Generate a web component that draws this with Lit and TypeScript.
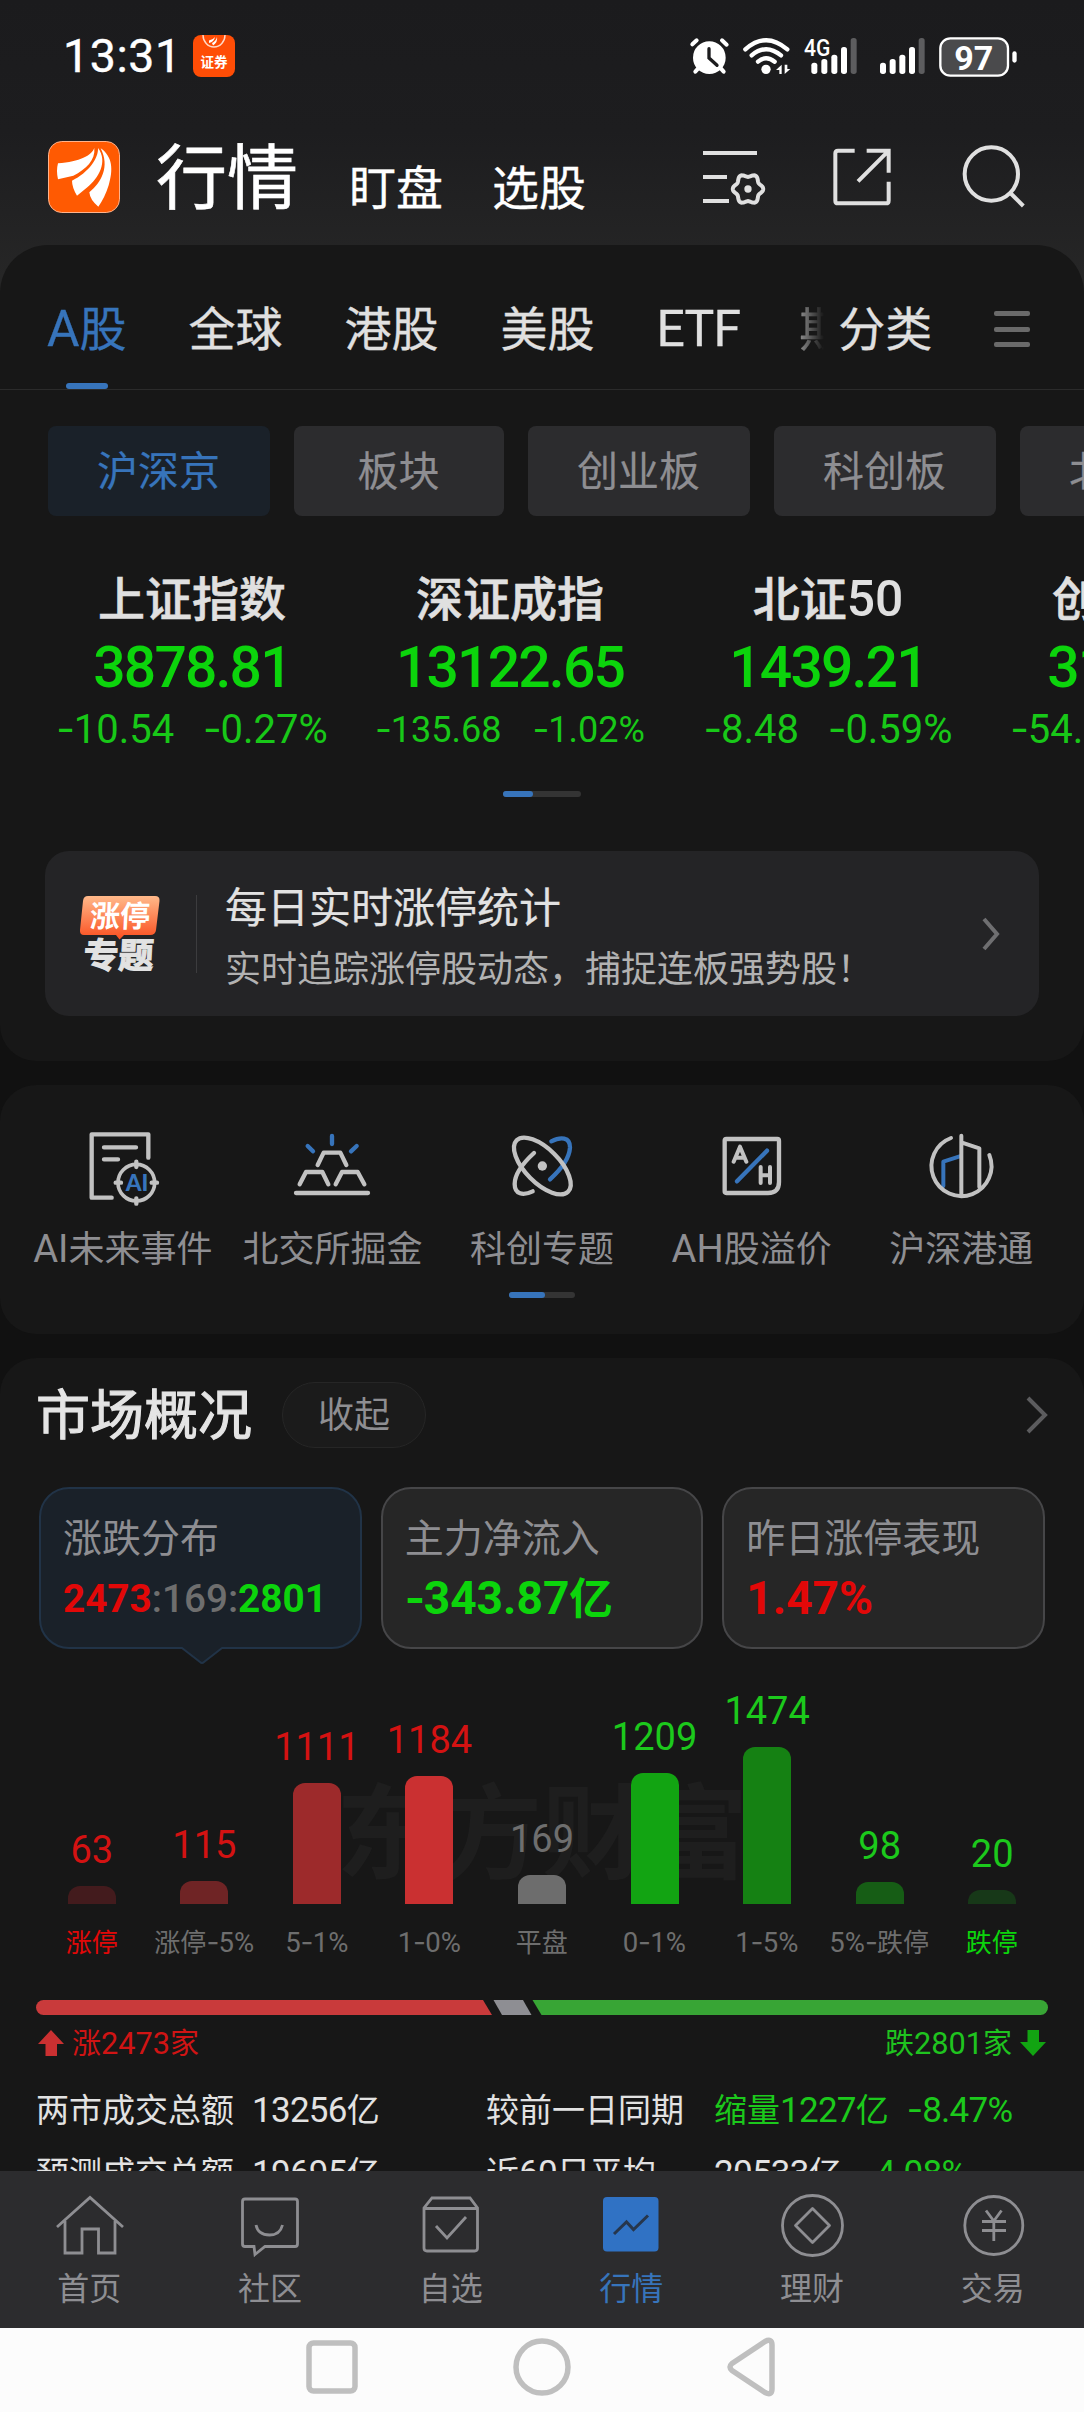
import { LitElement, html, css, svg } from "lit";
import { customElement, property } from "lit/decorators.js";

/** Splits mixed text so Latin runs and dashes can be sized apart from Han characters. */
const mix = (text: string) =>
  (text.match(/-|[\x20-\x2c\x2e-\x7e]+|[^\x20-\x7e]+/g) ?? []).map((run) =>
    run === "-"
      ? html`<span class="dash">-</span>`
      : /^[\x20-\x7e]/.test(run)
        ? html`<span class="lat">${run}</span>`
        : run
  );

const base = css`
  :host, * { box-sizing: border-box; }
  .lat { font-size: 1.06em; line-height: 0; white-space: pre; }
  .dash { font-family: Inter, sans-serif; line-height: 0; font-size: 1.08em; letter-spacing: -0.03em; }
  svg { display: block; flex: none; }
`;

const gearPath = (() => {
  const pts: string[] = [];
  for (let i = 0; i < 120; i++) {
    const a = (i / 120) * Math.PI * 2;
    const r = 41 + 4.6 * Math.cos(6 * a);
    pts.push(`${(234 + r * Math.cos(a)).toFixed(1)} ${(507 + r * Math.sin(a)).toFixed(1)}`);
  }
  return `M${pts.join("L")}Z`;
})();

@customElement("status-bar")
class StatusBar extends LitElement {
  static styles = [base, css`
    :host { display: flex; align-items: center; height: 112px; padding: 0 66px 0 63px; color: #fff; }
    .time { font-size: 46.5px; line-height: 56px; width: 130px; letter-spacing: 0.6px; -webkit-text-stroke: 0.4px; }
    .grow { flex: 1; }
  `];
  render() {
    const sim = (xs: number[]) =>
      xs.map((x, i) => {
        const top = [128, 117, 104, 81, 54][i];
        return svg`<rect x=${x - 9} y=${top} width="18" height=${162 - top} rx="8" fill=${i === 4 ? "#5d5d5f" : "#fff"}></rect>`;
      });
    return html`
      <div class="time">13:31</div>
      <svg width="42" height="42" viewBox="0 0 42 42">
        <rect width="42" height="42" rx="8" fill="#ff4d06"></rect>
        <path d="M10 0A11 12 0 0 0 32 0" fill="none" stroke="#ffd9c8" stroke-width="1.4"></path>
        <path d="M22 2Q20 5 16 5.500V8Q21 7 22 2ZM24 2Q23 6 19 8L20 10.500Q25 7 24 2Z" fill="#fff"></path>
        <text x="21" y="31.500" text-anchor="middle" font-family="Noto Sans CJK SC, sans-serif" font-size="13.500" font-weight="700" fill="#fff">证券</text>
      </svg>
      <div class="grow"></div>
      <svg width="330" height="44" viewBox="54 42 990 132">
        <circle cx="118" cy="113" r="49" fill="#fff"></circle>
        <g stroke="#fff" stroke-width="12" stroke-linecap="round" fill="none">
          <path d="M67 73L80 61M156 61L170 74M84 146L76 155M153 146L161 155"></path>
        </g>
        <path d="M117 86V114L141 136" fill="none" stroke="#1c1c1e" stroke-width="10" stroke-linecap="round"></path>
        <g stroke="#fff" stroke-width="13" fill="none" stroke-linecap="round">
          <path d="M226 88Q288 33 352 88"></path>
          <path d="M245 106Q288 69 333 106"></path>
          <path d="M264 125Q288 105 314 125"></path>
        </g>
        <circle cx="288" cy="148" r="14" fill="#fff"></circle>
        <path d="M318 150L335 134V162H328V150ZM344 134V162L361 147H352V134Z" fill="#fff"></path>
        <text x="402" y="107" font-family="Roboto, sans-serif" font-weight="500" font-size="70" textLength="79" lengthAdjust="spacingAndGlyphs" fill="#fff">4G</text>
        ${sim([433, 463, 493, 522, 551])}
        ${sim([639, 668, 697, 726, 755])}
        <rect x="811" y="55" width="203" height="112" rx="30" fill="#4a4a4c" stroke="#fff" stroke-width="7"></rect>
        <rect x="1027" y="94" width="13" height="34" rx="6.500" fill="#fff"></rect>
        <text x="911" y="149" text-anchor="middle" font-family="Roboto, sans-serif" font-weight="700" font-size="102" fill="#fff">97</text>
      </svg>`;
  }
}

@customElement("app-header")
class AppHeader extends LitElement {
  static styles = [base, css`
    :host { display: flex; height: 133px; padding: 29px 56px 0 48px; color: #fff; white-space: nowrap; }
    .title { font-size: 71px; line-height: 76px; height: 76px; margin-left: 36px; width: 142px; -webkit-text-stroke: 0.6px #fff; }
    .link { font-size: 47px; line-height: 96px; height: 97px; margin-left: 51px; width: 94px; -webkit-text-stroke: 0.3px #fff; }
    .link + .link { margin-left: 49px; }
    .grow { flex: 1; }
    .ico { margin: 1px 0 0 57px; }
    .ico.last { margin-left: 61px; }
    g { fill: none; stroke: #e0e0e0; stroke-width: 12; }
  `];
  render() {
    return html`
      <svg width="72" height="72" viewBox="54 363 216 216">
        <rect x="55.500" y="364.500" width="213" height="213" rx="40" fill="#ff5a02" stroke="#ffb38c" stroke-width="3"></rect>
        <path fill="#fff" d="M193 384C185 406 150 425 84 430Q78 452 84 478L130 467C168 448 197 420 193 384Z"></path>
        <path fill="#fff" d="M204 384C206 415 175 458 126 482Q126 502 141 527L172 502C205 475 235 425 204 384Z"></path>
        <path fill="#fff" d="M212 385C248 410 250 450 236 496Q225 532 205 560Q180 540 178 517C215 487 240 440 212 385Z"></path>
      </svg>
      <div class="title">行情</div>
      <div class="link">盯盘</div>
      <div class="link">选股</div>
      <div class="grow"></div>
      <svg class="ico" width="70" height="70" viewBox="90 366 210 210">
        <g><path d="M99 399H261M99 471H171M99 543H177"></path><path d=${gearPath}></path></g>
        <circle cx="234" cy="507" r="11" fill="#e0e0e0"></circle>
      </svg>
      <svg class="ico" width="70" height="70" viewBox="471 366 210 210">
        <g><path d="M554 392H504Q496 392 496 400V542Q496 550 504 550H648Q656 550 656 542V485M590 392H656V458M564 484L654 394"></path></g>
      </svg>
      <svg class="ico last" width="70" height="70" viewBox="864 366 210 210">
        <g><circle cx="964" cy="462" r="80"></circle><path d="M1018 516L1060 558"></path></g>
      </svg>`;
  }
}

@customElement("market-tabs")
class MarketTabs extends LitElement {
  static styles = [base, css`
    :host { display: block; }
    .tabs { display: flex; height: 145px; border-bottom: 1px solid #2b2b2b; padding: 54px 54px 0 47px; font-size: 47px; line-height: 62px; color: #e0e0e0; white-space: nowrap; -webkit-text-stroke: 0.3px; }
    .tab { margin-right: 62px; height: 90px; display: flex; flex-direction: column; align-items: center; justify-content: space-between; }
    .tab.etf { margin-right: 59px; letter-spacing: -0.8px; }
    .tab.on { color: #3774bb; }
    .mark { width: 42px; height: 6px; border-radius: 3px; background: #3774bb; }
    .cut { width: 25px; height: 63px; overflow: hidden; -webkit-mask-image: linear-gradient(90deg, rgba(0,0,0,.6), transparent); mask-image: linear-gradient(90deg, rgba(0,0,0,.6), transparent); }
    .more { margin-left: 14px; }
    .grow { flex: 1; }
    .menu { display: flex; flex-direction: column; gap: 10.500px; padding-top: 12px; }
    .menu i { width: 36px; height: 5px; border-radius: 2px; background: #6a6a6a; }
    .chips { display: flex; gap: 24px; padding: 36px 0 0 48px; overflow: hidden; }
    .chip { flex: none; width: 222px; height: 90px; border-radius: 8px; background: #2c2c2e; color: #8e8e92; font-size: 41px; line-height: 93px; text-align: center; padding-right: 1px; -webkit-text-stroke: 0.2px; }
    .chip.short { width: 210px; }
    .chip.on { background: #1a2129; color: #3774bb; }
  `];
  render() {
    return html`
      <div class="tabs">
        <div class="tab on"><span>${mix("A股")}</span><i class="mark"></i></div>
        ${["全球", "港股", "美股"].map((t) => html`<div class="tab">${t}</div>`)}
        <div class="tab etf"><span>${mix("ETF")}</span></div>
        <div class="cut">期</div>
        <div class="more">分类</div>
        <div class="grow"></div>
        <div class="menu"><i></i><i></i><i></i></div>
      </div>
      <div class="chips">
        ${["沪深京", "板块", "创业板", "科创板", "北交所"].map(
          (t, i) => html`<div class="chip ${i === 0 ? "on" : ""} ${t.length === 2 ? "short" : ""}">${t}</div>`
        )}
      </div>`;
  }
}

@customElement("pager-bar")
class PagerBar extends LitElement {
  @property({ type: Number }) total = 78;
  @property({ type: Number }) active = 30;
  static styles = css`
    :host { display: flex; justify-content: center; }
    .track { height: 6px; border-radius: 3px; background: #343434; }
    .fill { height: 6px; border-radius: 3px; background: #3774bb; }
  `;
  render() {
    return html`<div class="track" style="width:${this.total}px"><div class="fill" style="width:${this.active}px"></div></div>`;
  }
}

@customElement("index-strip")
class IndexStrip extends LitElement {
  static styles = [base, css`
    :host { display: block; height: 238px; padding-top: 53px; overflow: hidden; }
    .row { display: flex; width: 1272px; margin-left: 33px; }
    .col { width: 318px; text-align: center; white-space: nowrap; }
    .name { font-size: 47px; line-height: 61px; font-weight: 500; color: #e0e0e0; -webkit-text-stroke: 0.6px #e0e0e0; }
    .name .lat { -webkit-text-stroke: 0; }
    .val { font-size: 57px; line-height: 75px; font-weight: 500; color: #0cd40c; letter-spacing: -1.8px; }
    .chg { display: flex; justify-content: center; gap: 29px; font-size: 37.700px; line-height: 50px; color: #18c818; }
    .chg.small { font-size: 34px; gap: 31px; }
  `];
  render() {
    const data = [
      ["上证指数", "3878.81", "-10.54", "-0.27%"],
      ["深证成指", "13122.65", "-135.68", "-1.02%"],
      ["北证50", "1439.21", "-8.48", "-0.59%"],
      ["创业板指", "3117.69", "-54.61", "-1.72%"],
    ];
    return html`<div class="row">
      ${data.map(([n, v, a, b]) => html`<div class="col">
        <div class="name">${mix(n)}</div>
        <div class="val">${v}</div>
        <div class="chg ${a.length > 6 ? "small" : ""}"><span>${mix(a)}</span><span>${mix(b)}</span></div>
      </div>`)}
    </div>`;
  }
}

@customElement("topic-banner")
class TopicBanner extends LitElement {
  static styles = [base, css`
    :host { display: flex; align-items: center; height: 165px; margin: 54px 45px 0; padding: 0 36px 0 33px; border-radius: 24px; background: #242426; }
    .rule { width: 1px; height: 78px; background: #3c3c3e; margin: 0 28px 0 34px; }
    .copy { flex: 1; white-space: nowrap; padding-top: 12px; }
    .t { font-size: 42px; line-height: 60px; color: #e2e2e2; -webkit-text-stroke: 0.2px; }
    .s { font-size: 36px; line-height: 62px; color: #b2b2b2; }
  `];
  render() {
    return html`
      <svg width="84" height="84" viewBox="0 0 84 84">
        <defs><linearGradient id="g" x1="0" y1="0" x2="0" y2="1">
          <stop offset="0" stop-color="#ffb98a"></stop><stop offset="1" stop-color="#fb4f20"></stop>
        </linearGradient></defs>
        <path d="M10 4H77Q82 4 81.500 9L78 38Q77.500 43 72 43H46L41.500 47.500L38 43H6Q1.500 43 2 38L5 9Q5.500 4 10 4Z" fill="url(#g)"></path>
        <g font-family="Noto Sans CJK SC, sans-serif" font-weight="700" text-anchor="middle">
          <text transform="translate(41.500 34.500) skewX(-3)" font-size="30" fill="#fff">涨停</text>
          <text transform="translate(40 76) skewX(-3)" font-size="35" fill="#e2e2e2" stroke="#e2e2e2" stroke-width="1.200">专题</text>
        </g>
      </svg>
      <i class="rule"></i>
      <div class="copy"><div class="t">每日实时涨停统计</div><div class="s">实时追踪涨停股动态，捕捉连板强势股！</div></div>
      <svg width="24" height="36" viewBox="0 0 24 36"><path d="M5 3L18 18L5 33" fill="none" stroke="#6f6f71" stroke-width="4"></path></svg>`;
  }
}

@customElement("feature-row")
class FeatureRow extends LitElement {
  static styles = [base, css`
    :host { display: block; height: 249px; margin-top: 24px; padding-top: 43px; border-radius: 36px; background: #171717; }
    .row { display: grid; grid-template-columns: repeat(5, 1fr); padding: 0 18px; }
    .cell { display: flex; flex-direction: column; align-items: center; }
    .label { font-size: 36px; line-height: 50px; margin-top: 17px; color: #8e8e92; white-space: nowrap; }
    g { fill: none; stroke: #c2c2c2; stroke-width: 13; stroke-linecap: round; stroke-linejoin: round; }
    .b { stroke: #3774bb; }
    .pager { margin-top: 17px; }
  `];
  render() {
    const icons: [string, string, unknown][] = [
      ["AI未来事件", "69 39 240 240", svg`<g>
        <path d="M155 248H95V58H265V128M132 97H228M132 133H174"></path>
        <circle cx="229" cy="203" r="55" stroke-width="11"></circle>
        <path d="M229 140V156M229 250V266M167 203H183M275 203H291" stroke-width="13"></path>
        </g><text x="231" y="227" text-anchor="middle" font-family="Lato, sans-serif" font-weight="900" font-size="66" textLength="68" lengthAdjust="spacingAndGlyphs" fill="#3774bb">AI</text>`],
      ["北交所掘金", "696 39 240 240", svg`<g>
        <path d="M773 150L791 113H841L859 150M719 208L738 171H787L805 208M827 208L846 171H893L913 208M708 234H924"></path>
        <path class="b" d="M816 63V87M743 93L759 109M890 93L873 109"></path></g>`],
      ["科创专题", "1325 39 240 240", svg`<g>
        <path class="b" d="M1473 79C1500 65 1530 65 1529 98C1527 130 1500 165 1469 193"></path>
        <ellipse cx="1446" cy="153" rx="109" ry="51" transform="rotate(45 1446 153)"></ellipse>
        <path d="M1421 114C1385 147 1363 180 1363 207C1363 238 1388 243 1417 229"></path>
        </g><circle cx="1446" cy="153" r="14" fill="#c2c2c2"></circle>`],
      ["AH股溢价", "93 39 240 240", svg`<g>
        <path d="M136 72H289Q294 72 294 77V201Q294 234 261 234H136Q131 234 131 229V77Q131 72 136 72Z"></path>
        <path d="M158 140L177 95L196 140M165 128H189M239 156V204M267 156V204M239 181H267" stroke-width="12"></path>
        <path class="b" d="M168 199L258 107"></path></g>`],
      ["沪深港通", "722 39 240 240", svg`<g>
        <path class="b" d="M789 213V140L838 124" stroke-width="12"></path>
        <path d="M812 69A90 90 0 1 0 927 120M843 62V240M843 82L897 100V216" stroke-width="12"></path></g>`],
    ];
    return html`<div class="row">
      ${icons.map(([t, vb, art]) => html`<div class="cell">
        <svg width="80" height="80" viewBox=${vb}>${art}</svg>
        <div class="label">${mix(t)}</div></div>`)}
    </div>
    <pager-bar class="pager" .total=${66} .active=${36}></pager-bar>`;
  }
}

@customElement("market-overview")
class MarketOverview extends LitElement {
  static styles = [base, css`
    :host { display: block; height: 813px; margin-top: 24px; border-radius: 36px 36px 0 0; background: #171717; overflow: hidden; white-space: nowrap; }
    .head { display: flex; align-items: center; height: 66px; margin-top: 24px; padding: 0 35px 0 36px; }
    .title { font-size: 54px; line-height: 66px; padding-top: 4px; color: #e4e4e4; -webkit-text-stroke: 1.1px #e4e4e4; }
    .fold { width: 144px; height: 66px; margin-left: 30px; border: 1.500px solid #262626; border-radius: 33px; background: #1b1b1b; color: #8e8e92; font-size: 36px; line-height: 67px; text-align: center; }
    .grow { flex: 1; }
    .cards { display: grid; grid-template-columns: repeat(3, 1fr); gap: 19px; margin: 39px 39px 0; }
    .card { position: relative; height: 162px; border: 2px solid #464648; border-radius: 30px; background: #262626; padding: 20px 0 0 22px; }
    .card.on { background: #1a2129; border-color: #213347; }
    .tail { position: absolute; left: 141px; top: 158px; }
    .label { font-size: 39px; line-height: 60px; color: #8e8e92; }
    .num { font-size: 43.500px; line-height: 62px; font-weight: 700; }
    .num .dash { font-size: 1em; }
    .num.tri { font-size: 36.500px; font-weight: 500; }
    .num.tri span.up, .num.tri span.down { font-weight: 700; }
    .up { color: #e20808; } .down { color: #0cd40c; } .flat { color: #6e6e6e; }
    .chart { position: relative; display: grid; grid-template-columns: repeat(9, 1fr); height: 255px; padding: 0 35.500px; align-items: end; }
    .mark { position: absolute; left: 336px; top: 113px; font-size: 103px; line-height: 130px; font-weight: 700; color: #1e1e1e; font-family: "Noto Sans CJK SC", sans-serif; }
    .bar { position: relative; display: flex; flex-direction: column; align-items: center; }
    .n { font-size: 38px; line-height: 44px; margin-bottom: 14.500px; }
    .n.up { color: #d41212; } .n.down { color: #1cc91c; }
    .col { width: 48px; border-radius: 12px 12px 0 0; }
    .axis { display: grid; grid-template-columns: repeat(9, 112.500px); padding-left: 35.500px; margin-top: 21px; font-size: 26px; line-height: 36px; text-align: center; color: #6e6e6e; }
    .axis div { display: flex; justify-content: center; }
    .ratio { margin: 39px 36px 0; }
    .sum { display: flex; justify-content: space-between; padding: 0 38px; margin-top: 11px; font-size: 29px; line-height: 36px; }
    .sum div { display: flex; align-items: center; gap: 8px; }
    .sum svg { margin-top: -2px; }
    .sum .up { color: #d01414; } .sum .down { color: #1fc31f; }
    .table { display: grid; grid-template-columns: 216px 234px 228px auto; padding-left: 36px; margin-top: 18px; font-size: 33px; line-height: 62.700px; color: #e2e2e2; }
    .table .lat { letter-spacing: -0.7px; }
    .pair { display: flex; gap: 18px; }
    .pair.wide { gap: 19px; }
    .pair .down { color: #1cc91c; }
  `];
  render() {
    const bars: [string, string, number, string, string][] = [
      ["63", "涨停", 18, "#431b1d", "up"],
      ["115", "涨停-5%", 23, "#6f2425", "up"],
      ["1111", "5-1%", 121, "#9d2a2b", "up"],
      ["1184", "1-0%", 128, "#ca3031", "up"],
      ["169", "平盘", 29, "#6d6d6d", "flat"],
      ["1209", "0-1%", 131, "#12a412", "down"],
      ["1474", "1-5%", 157, "#158113", "down"],
      ["98", "5%-跌停", 22, "#165d15", "down"],
      ["20", "跌停", 14, "#173818", "down"],
    ];
    return html`
      <div class="head">
        <div class="title">市场概况</div>
        <div class="fold">收起</div>
        <div class="grow"></div>
        <svg width="24" height="40" viewBox="0 0 24 40"><path d="M3 3L20 20L3 37" fill="none" stroke="#5c5c5e" stroke-width="4"></path></svg>
      </div>
      <div class="cards">
        <div class="card on">
          <div class="label">涨跌分布</div>
          <div class="num tri flat"><span class="up">${mix("2473")}</span>${mix(":169:")}<span class="down">${mix("2801")}</span></div>
          <svg class="tail" width="40" height="18" viewBox="0 0 40 18"><path d="M0 0L18 15Q20 17 22 15L40 0" fill="#1a2129"></path><path d="M0 1L18 15Q20 17 22 15L40 1" fill="none" stroke="#213347" stroke-width="2"></path></svg>
        </div>
        <div class="card"><div class="label">主力净流入</div><div class="num down">${mix("-343.87亿")}</div></div>
        <div class="card"><div class="label">昨日涨停表现</div><div class="num up">${mix("1.47%")}</div></div>
      </div>
      <div class="chart">
        <div class="mark">东方财富</div>
        ${bars.map(([n, , h, c, k]) => html`<div class="bar">
          <div class="n ${k}">${n}</div>
          <div class="col" style="height:${h}px;background:${c}"></div></div>`)}
      </div>
      <div class="axis">
        ${bars.map(([, t], i) => html`<div class=${i === 0 ? "up" : i === 8 ? "down" : ""}><span>${mix(t)}</span></div>`)}
      </div>
      <svg class="ratio" width="1012" height="15" viewBox="0 0 1012 15">
        <path d="M7.500 0H447L456 15H7.500A7.500 7.500 0 0 1 7.500 0Z" fill="#c93a3b"></path>
        <path d="M457.500 0H487L495.500 15H466Z" fill="#8e8e93"></path>
        <path d="M496.500 0H1004.500A7.500 7.500 0 0 1 1004.500 15H505.500Z" fill="#38a535"></path>
      </svg>
      <div class="sum">
        <div class="up"><svg width="26" height="26" viewBox="0 0 26 26"><path d="M13 0L26 14H19V26H7.500V14H0Z" fill="#cb3031"></path></svg><span>${mix("涨2473家")}</span></div>
        <div class="down"><span>${mix("跌2801家")}</span><svg width="26" height="26" viewBox="0 0 26 26"><path d="M7.500 0H19V12H26L13 26L0 12H7.500Z" fill="#12a412"></path></svg></div>
      </div>
      <div class="table">
        <span>两市成交总额</span><span>${mix("13256亿")}</span><span>较前一日同期</span>
        <div class="pair"><span class="down">${mix("缩量1227亿")}</span><span class="down">${mix("-8.47%")}</span></div>
        <span>预测成交总额</span><span>${mix("19695亿")}</span><span>${mix("近60日平均")}</span>
        <div class="pair wide"><span>${mix("20533亿")}</span><span class="down">${mix("-4.08%")}</span></div>
      </div>`;
  }
}

@customElement("bottom-tabs")
class BottomTabs extends LitElement {
  static styles = [base, css`
    :host { display: grid; grid-template-columns: repeat(6, 1fr); height: 157px; padding-top: 19px; background: #2c2c2e; }
    .tab { display: flex; flex-direction: column; align-items: center; font-size: 32px; line-height: 44px; color: #8e8e92; gap: 7px; }
    .tab span { padding-right: 2px; }
    .tab.on { color: #3774bb; }
    g { fill: none; stroke: #8e8e92; stroke-width: 2.800; }
  `];
  render() {
    const tabs: [string, unknown][] = [
      ["首页", svg`<g><path d="M2 37L35 7.500L68 37M10 31V63H27V39H43.500V63H60V31"></path></g>`],
      ["社区", svg`<g><path d="M9 9H59Q61.500 9 61.500 11.500V54Q61.500 56.500 59 56.500H29L19 64.500L18 56.500H9Q6.500 56.500 6.500 54V11.500Q6.500 9 9 9Z"></path><path d="M20 35Q22 45 33.500 45Q44 45 46.500 35"></path></g>`],
      ["自选", svg`<g><path d="M15 8H53L60.500 18V58Q60.500 61 57.500 61H10Q7 61 7 58V18ZM7 18.500H60.500M19 36L30 48L49 27"></path></g>`],
      ["行情", svg`<rect x="6" y="7" width="55.500" height="54.500" rx="4" fill="#3072c4"></rect><path d="M17 44L29.500 32L36.500 39.500L51 25.500" fill="none" stroke="#26364c" stroke-width="3"></path>`],
      ["理财", svg`<g><circle cx="34.500" cy="35.500" r="30"></circle><path d="M34.500 18.500L51.500 35.500L34.500 52.500L17.500 35.500Z" stroke-linejoin="round"></path></g>`],
      ["交易", svg`<g><circle cx="34.800" cy="35.500" r="29"></circle><path d="M27 20.500L34.800 31L42.500 20.500M23 31.500H47M23 40.500H47M34.800 31V51"></path></g>`],
    ];
    return html`${tabs.map(([t, art]) => html`<div class="tab ${t === "行情" ? "on" : ""}">
      <svg width="70" height="70" viewBox="0 0 70 70">${art}</svg><span>${t}</span></div>`)}`;
  }
}

@customElement("system-nav")
class SystemNav extends LitElement {
  static styles = css`
    :host { display: flex; box-sizing: border-box; justify-content: center; align-items: flex-start; gap: 150px; height: 84px; padding-top: 8px; background: #fcfcfc; }
    svg { display: block; fill: none; stroke: #bfbfbf; stroke-width: 5.500; stroke-linejoin: round; }
  `;
  render() {
    return html`
      <svg width="60" height="62" viewBox="0 0 60 62"><rect x="7" y="7" width="46" height="48" rx="4.500"></rect></svg>
      <svg width="60" height="62" viewBox="0 0 60 62"><circle cx="30" cy="31" r="26"></circle></svg>
      <svg width="60" height="62" viewBox="0 0 60 62"><path d="M10 27.500L43 5.500Q50 2 50 9V53Q50 60 43 56.500L10 34.500Q6 31 10 27.500Z"></path></svg>`;
  }
}

@customElement("app-root")
class AppRoot extends LitElement {
  static styles = css`
    :host { display: block; width: 1084px; height: 2412px; overflow: hidden; background: #111; font-family: Roboto, "Noto Sans CJK SC", sans-serif; }
    .top { background: linear-gradient(#1b1b1d, #1d1d1f 45%, #272727 100%); height: 293px; }
    .panel { margin-top: -48px; height: 816px; border-radius: 48px 48px 36px 36px; background: #171717; overflow: hidden; }
    .pager { margin-top: 37px; }
  `;
  render() {
    return html`
      <div class="top"><status-bar></status-bar><app-header></app-header></div>
      <div class="panel">
        <market-tabs></market-tabs>
        <index-strip></index-strip>
        <pager-bar class="pager" .total=${78} .active=${30}></pager-bar>
        <topic-banner></topic-banner>
      </div>
      <feature-row></feature-row>
      <market-overview></market-overview>
      <bottom-tabs></bottom-tabs>
      <system-nav></system-nav>`;
  }
}
